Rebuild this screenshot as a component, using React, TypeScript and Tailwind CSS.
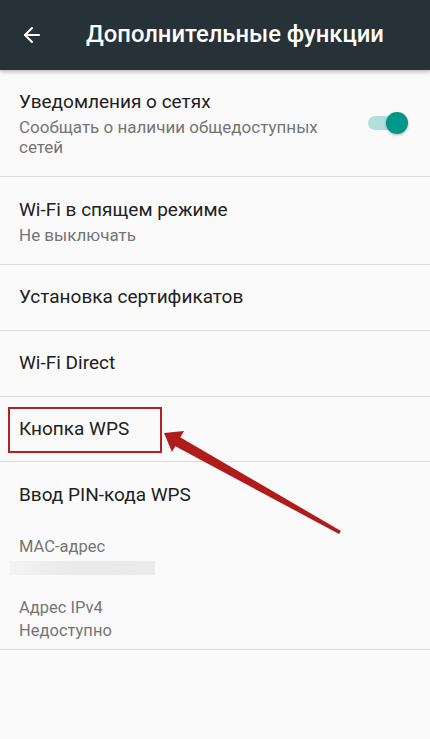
import React from 'react';
import { ArrowLeft } from 'lucide-react';

const font = { fontFamily: 'Roboto, "Noto Sans", sans-serif' };

function Divider() {
  return <div className="h-px bg-[#dcdcdc]" />;
}

function SimpleRow({ title, h = 'h-[65px]' }: { title: string; h?: string }) {
  return (
    <div className={`${h} flex items-center px-[19px] text-[19px] text-[#212121]`}>{title}</div>
  );
}

export default function App() {
  return (
    <div className="relative w-[430px] h-[739px] bg-[#fafafa] overflow-hidden" style={font}>
      <header className="h-[70px] bg-[#263238] flex items-center shadow-[0_2px_4px_rgba(0,0,0,0.25)] relative z-10">
        <ArrowLeft size={24} strokeWidth={2} className="text-white ml-[20px]" />
        <h1 className="ml-[42px] text-[23.8px] font-medium text-white">Дополнительные функции</h1>
      </header>

      <div className="flex items-start justify-between px-[19px] pt-[20px] pb-[19px]">
        <div className="max-w-[330px]">
          <div className="text-[19px] leading-[24px] text-[#212121]">Уведомления о сетях</div>
          <div className="mt-[3px] text-[17px] leading-[20px] text-[#757575]">
            Сообщать о наличии общедоступных сетей
          </div>
        </div>
        <div className="relative w-[40px] h-[20px] mt-[23px] mr-[3px] flex items-center">
          <div className="w-[34px] h-[14px] rounded-full bg-[#b2dfdb]" />
          <div className="absolute right-0 w-[22px] h-[22px] rounded-full bg-[#009688] shadow-[0_1px_3px_rgba(0,0,0,0.3)]" />
        </div>
      </div>
      <Divider />

      <div className="px-[19px] pt-[21px] pb-[19px]">
        <div className="text-[19px] leading-[24px] text-[#212121]">Wi-Fi в спящем режиме</div>
        <div className="mt-[3px] text-[17px] leading-[20px] text-[#757575]">Не выключать</div>
      </div>
      <Divider />

      <SimpleRow title="Установка сертификатов" />
      <Divider />
      <SimpleRow title="Wi-Fi Direct" />
      <Divider />
      <div className="relative">
        <SimpleRow title="Кнопка WPS" h="h-[64px]" />
        <div className="absolute left-[8px] top-[10px] w-[154px] h-[46px] border-2 border-[#b22222]" />
      </div>
      <Divider />

      <SimpleRow title="Ввод PIN-кода WPS" h="h-[66px]" />
      <div className="px-[19px] pt-[9px]">
        <div className="text-[16.5px] leading-[20px] text-[#757575]">MAC-адрес</div>
        <div className="mt-[4px] -ml-[9px] w-[145px] h-[14px] bg-gradient-to-r from-[#f3f3f3] via-[#e8e8e8] to-[#ebebeb]" />
        <div className="mt-[23px] text-[16.5px] leading-[20px] text-[#757575]">Адрес IPv4</div>
        <div className="mt-[3px] text-[16.5px] leading-[20px] text-[#757575]">Недоступно</div>
      </div>
      <div className="mt-[8px]">
        <Divider />
      </div>

      <svg className="absolute left-0 top-0 pointer-events-none" width="430" height="739" viewBox="0 0 430 739">
        <polygon points="178,436 173,445 339,534 341,531" fill="#b01c1c" />
        <polygon points="164,433 184,431 172,452" fill="#b01c1c" />
      </svg>
    </div>
  );
}
